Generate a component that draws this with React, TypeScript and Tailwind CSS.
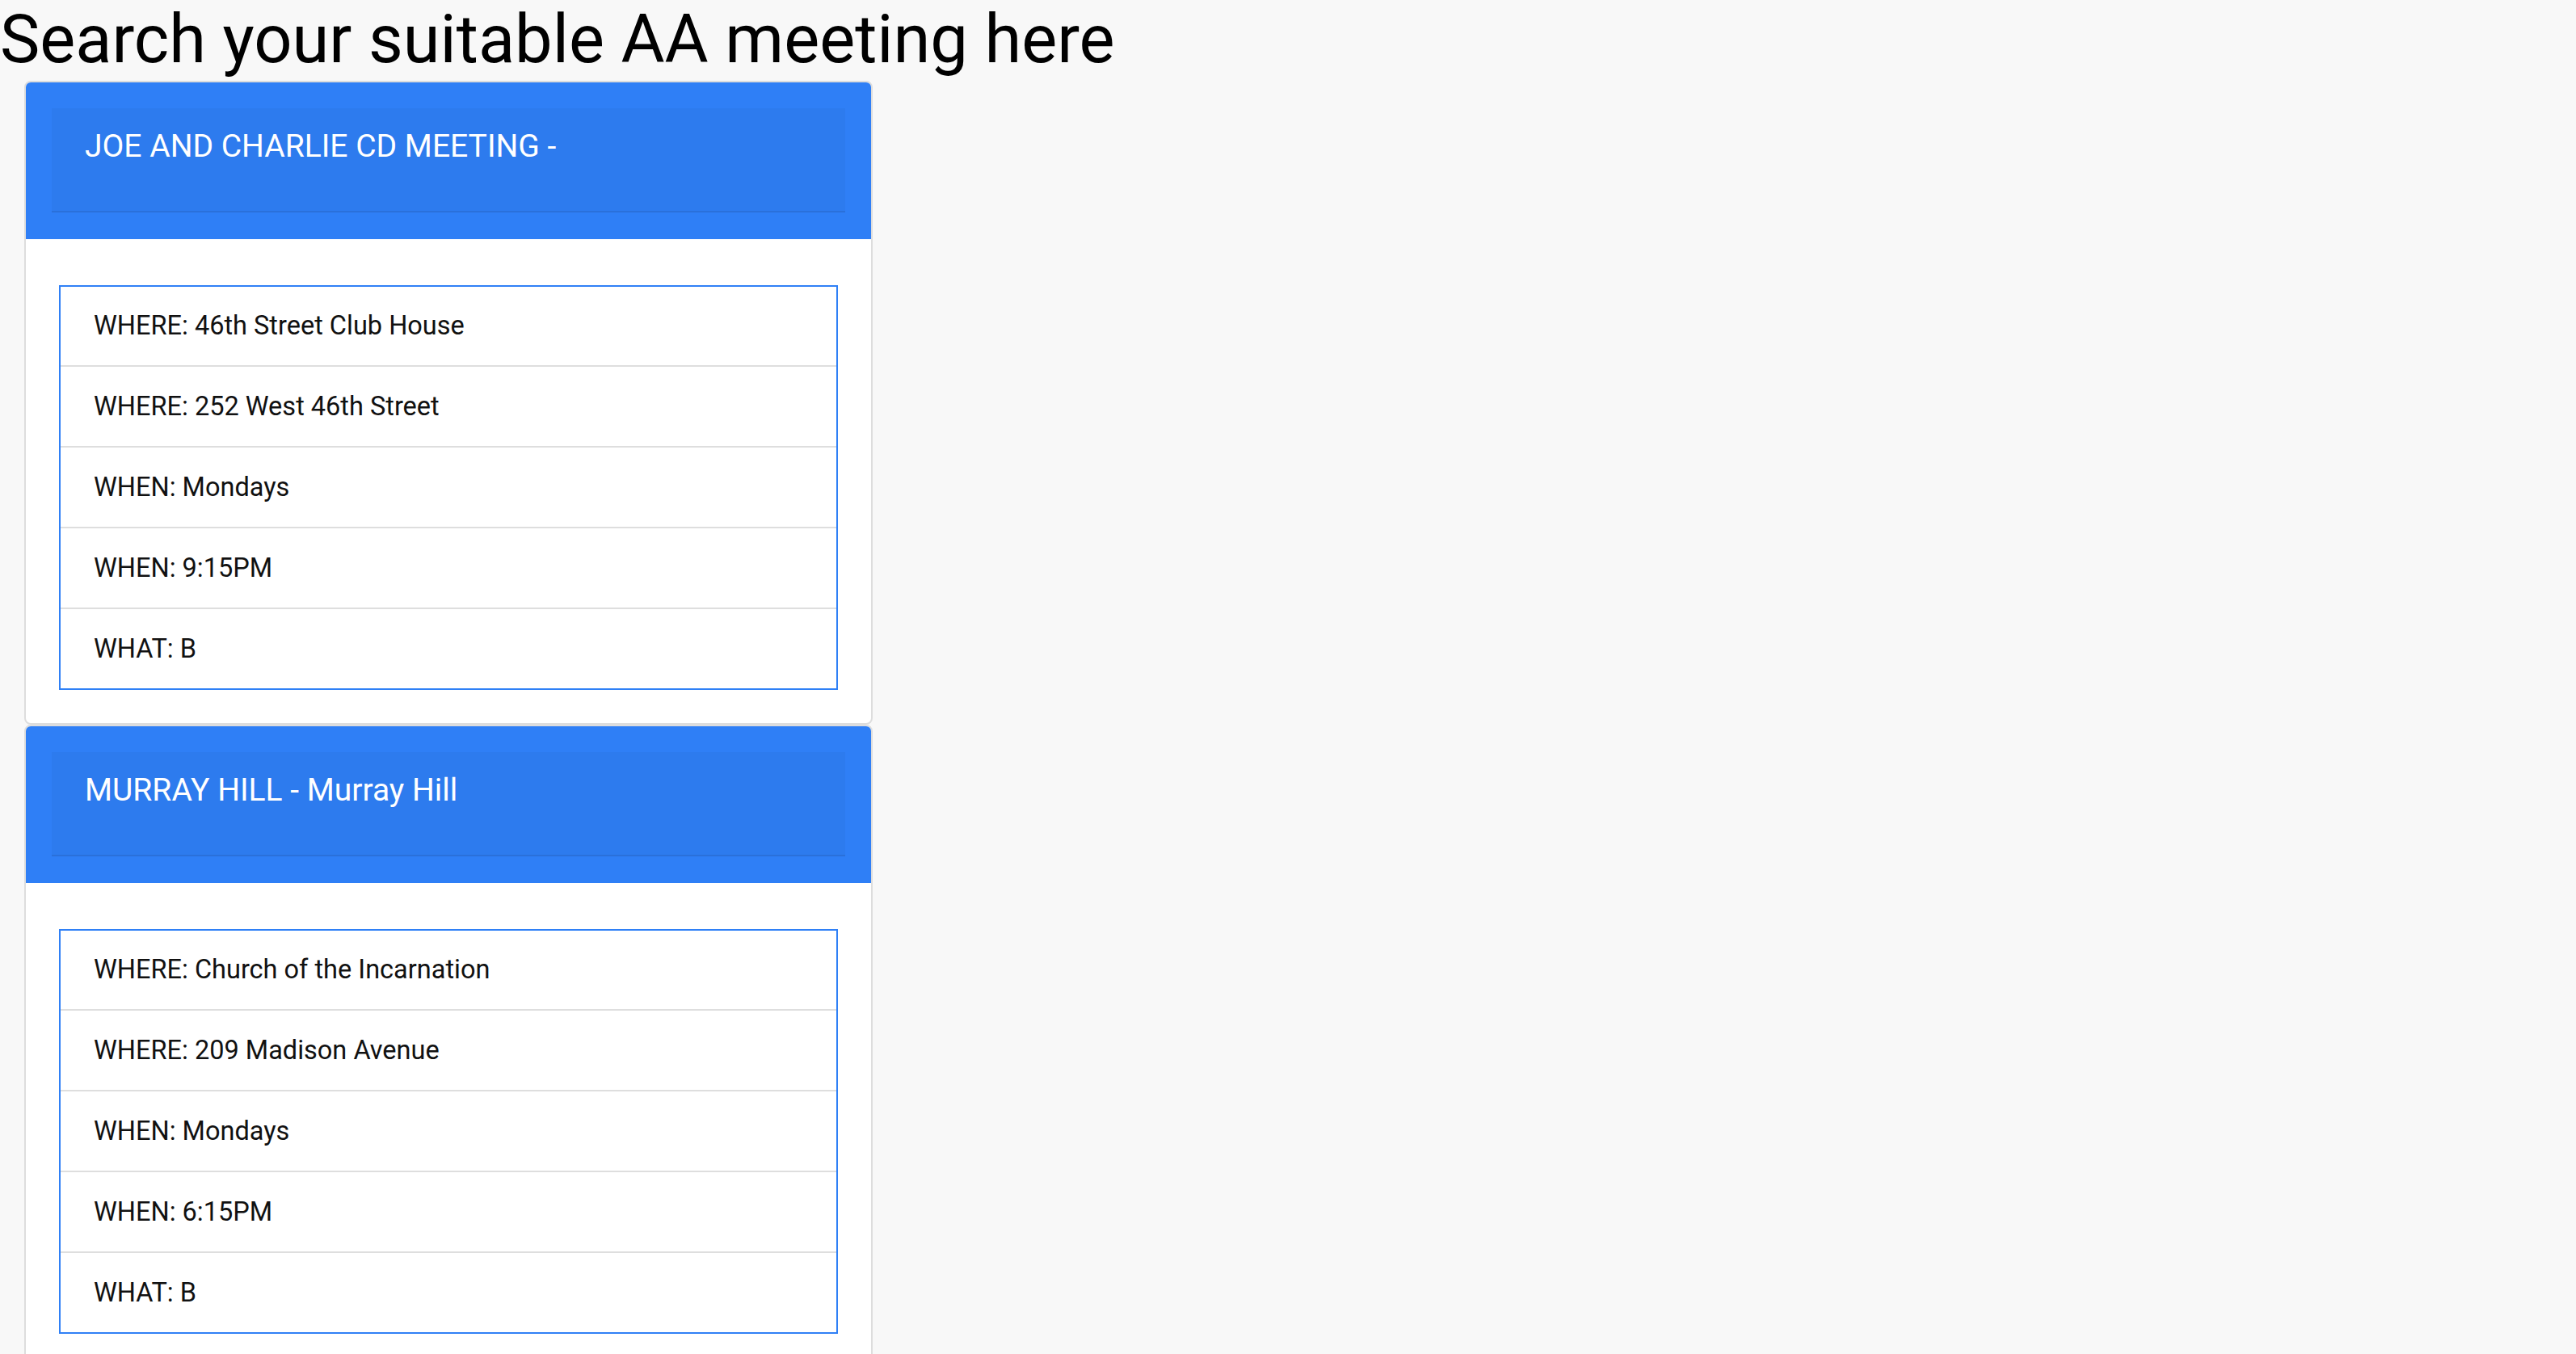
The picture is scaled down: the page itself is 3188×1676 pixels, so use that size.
import React from 'react';

interface Meeting {
  title: string;
  details: string[];
}

const meetings: Meeting[] = [
  {
    title: 'JOE AND CHARLIE CD MEETING -',
    details: [
      'WHERE: 46th Street Club House',
      'WHERE: 252 West 46th Street',
      'WHEN: Mondays',
      'WHEN: 9:15PM',
      'WHAT: B',
    ],
  },
  {
    title: 'MURRAY HILL - Murray Hill',
    details: [
      'WHERE: Church of the Incarnation',
      'WHERE: 209 Madison Avenue',
      'WHEN: Mondays',
      'WHEN: 6:15PM',
      'WHAT: B',
    ],
  },
];

function MeetingCard({ meeting }: { meeting: Meeting }) {
  return (
    <div className="ml-[30px] w-[1050px] overflow-hidden rounded-lg border-2 border-[#dddddd] bg-white">
      {/* Header */}
      <div className="bg-[#2f7ff6] p-[32px] pb-[33px]">
        <div className="h-[129px] border-b-2 border-[#2a70da] bg-[#2d7bee] pl-[41px] pt-[24px]">
          <h2 className="text-[39px] leading-[46px] text-white">{meeting.title}</h2>
        </div>
      </div>

      {/* Body */}
      <div className="px-[41px] pt-[57px] pb-[41px]">
        <ul className="border-2 border-[#2f80f6]">
          {meeting.details.map((d, i) => (
            <li
              key={i}
              className={`flex items-center pl-[41px] text-[32.5px] text-[#111] ${
                i === 0 ? 'h-[97px]' : 'h-[100px] border-t-2 border-[#dedede]'
              }`}
            >
              {d}
            </li>
          ))}
        </ul>
      </div>
    </div>
  );
}

export default function App() {
  return (
    <div className="min-h-screen bg-[#f8f8f8] font-['Roboto',sans-serif]">
      <h1 className="pb-[3px] text-[83px] leading-[97px] text-black">Search your suitable AA meeting here</h1>
      <div className="flex flex-col">
        {meetings.map((m) => (
          <MeetingCard key={m.title} meeting={m} />
        ))}
      </div>
    </div>
  );
}
